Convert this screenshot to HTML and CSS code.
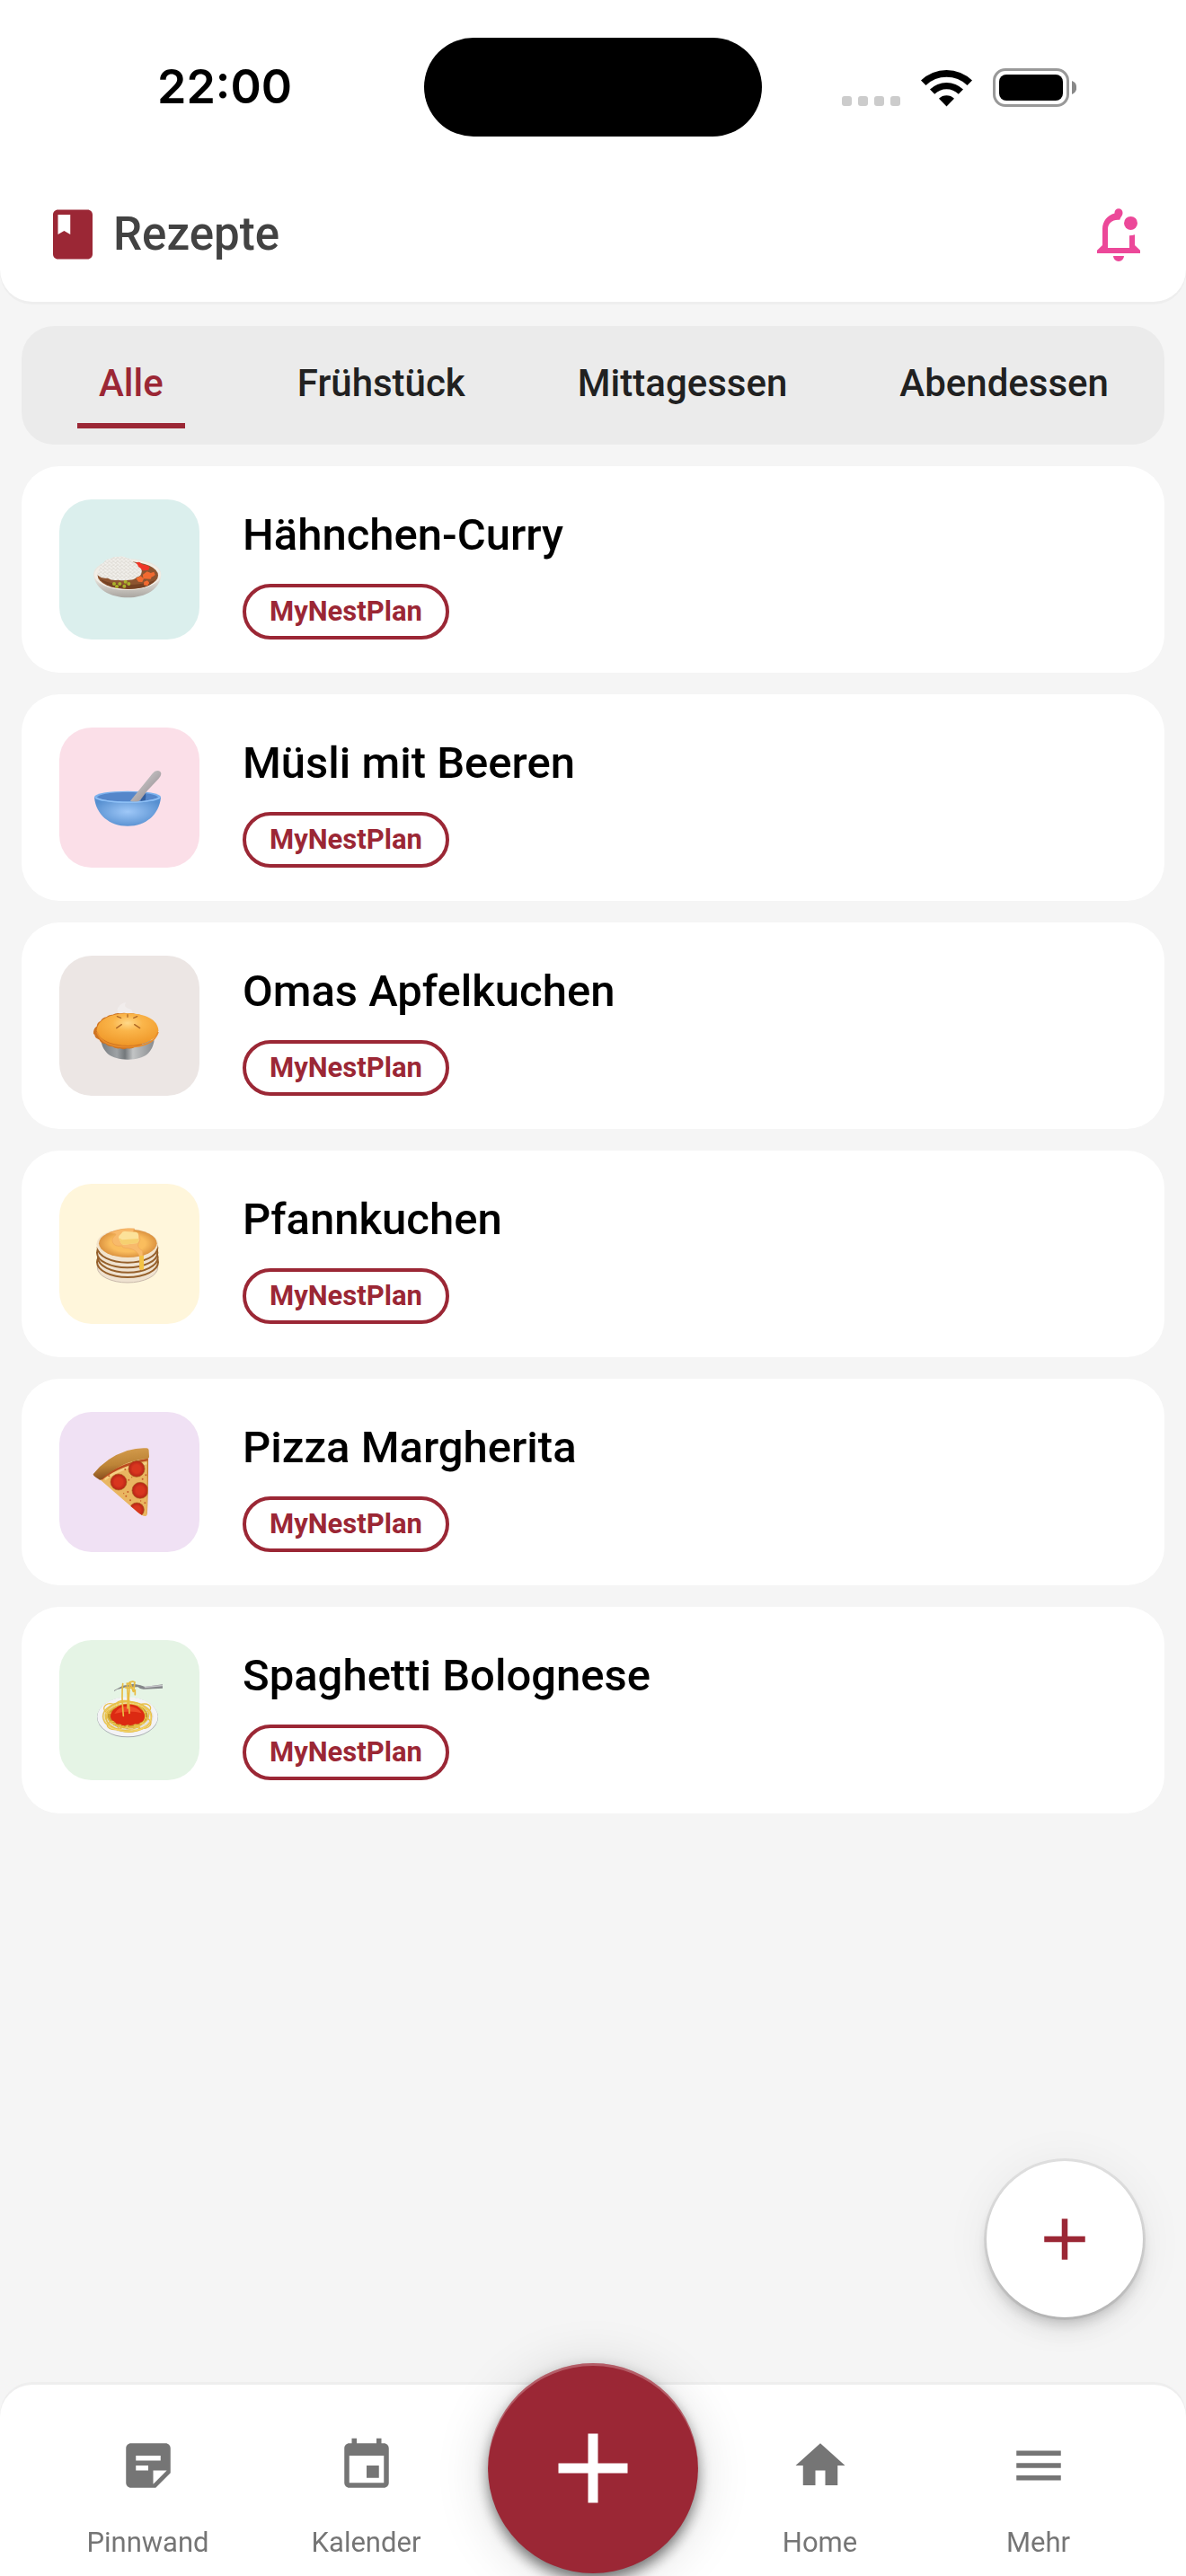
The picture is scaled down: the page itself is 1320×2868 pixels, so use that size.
FILE: index.html
```html
<!DOCTYPE html>
<html lang="de">
<head>
<meta charset="utf-8">
<meta name="viewport" content="width=device-width, initial-scale=1">
<title>Rezepte</title>
<link rel="stylesheet" href="styles.css">
</head>
<body>
<header class="header">
  <div class="status">
    <div class="status-left"><time class="clock">22:00</time></div>
    <div class="island"></div>
    <div class="status-right">
      <svg class="signal" viewBox="0 0 65 12" width="65" height="12" fill="#cccccc" aria-hidden="true"><rect width="11" height="11" rx="3"/><rect x="18" width="11" height="11" rx="3"/><rect x="36" width="11" height="11" rx="3"/><rect x="54" width="11" height="11" rx="3"/></svg>
      <svg viewBox="0 0 57 43" width="57" height="43" aria-hidden="true"><path d="M0 13.5A41 41 0 0 1 57 13.5L51.5 19A33 33 0 0 0 5.500 19ZM10 23.500A26.500 26.500 0 0 1 47 23.500L41.800 28.800A19 19 0 0 0 15.200 28.800ZM20 33.700A12.500 12.500 0 0 1 37 33.700L28.500 42.500Z"/></svg>
      <svg viewBox="0 0 93 43" width="93" height="43" aria-hidden="true"><rect x="1.500" y="1.500" width="82" height="40" rx="12.500" fill="none" stroke="#999" stroke-width="3"/><rect x="7" y="7" width="71" height="29" rx="8"/><path d="M88 14a8 8 0 0 1 0 15z" fill="#888"/></svg>
    </div>
  </div>
  <div class="appbar">
    <svg class="book" viewBox="0 0 24 24" width="66" height="66" aria-hidden="true"><path d="M18 2H6c-1.100 0-2 .9-2 2v16c0 1.100.9 2 2 2h12c1.100 0 2-.9 2-2V4c0-1.100-.9-2-2-2zM6 4h5v8l-2.500-1.500L6 12V4z"/></svg>
    <h1 class="title">Rezepte</h1>
    <button class="bell" aria-label="Benachrichtigungen">
      <svg viewBox="0 0 24 24" width="72" height="72" aria-hidden="true"><path d="M4 19v-1.100L6 16v-6c0-2.800 1.800-5.100 4.500-5.800V3.900a1.500 1.500 0 0 1 3 0c0 .4-.1.900-.3 1.200-.4.500-.6 1-.8 1.500C9.800 6.300 8 7.800 8 10v7h8v-4.600c.7 0 1.400-.1 2-.3V16l2 1.900V19zM10 20h4a2 2 0 0 1-4 0z"/><circle cx="16.500" cy="7.800" r="2.500"/></svg>
    </button>
  </div>
</header>

<main class="content">
  <nav class="tabs" aria-label="Kategorien">
    <button class="tab tab-active">Alle</button>
    <button class="tab">Frühstück</button>
    <button class="tab">Mittagessen</button>
    <button class="tab">Abendessen</button>
  </nav>

  <ul class="recipes">
    <li class="card">
      <svg class="thumb thumb-teal" viewBox="18 18 468 468" aria-hidden="true">
        <defs>
          <linearGradient id="bowl" x1="0" y1="0" x2="0" y2="1"><stop offset=".5" stop-color="#e9e5de"/><stop offset="1" stop-color="#a9a5a0"/></linearGradient>
          <pattern id="grains" width="14" height="12" patternUnits="userSpaceOnUse"><rect width="14" height="12" fill="#e6e3dd"/><ellipse cx="4" cy="3" rx="4" ry="2" fill="#f8f7f4" transform="rotate(30 4 3)"/><ellipse cx="10" cy="8" rx="4" ry="2" fill="#f4f2ee" transform="rotate(-40 10 8)"/><circle cx="3" cy="9" r="1" fill="#c4c0b8"/><circle cx="11" cy="2" r="1" fill="#cbc7bf"/></pattern>
        </defs>
        <path d="M132 270C132 238 180 217 246 217S358 237 358 270C355 318 305 346 247 346S138 318 132 270Z" fill="url(#bowl)"/>
        <ellipse cx="246" cy="270" rx="111" ry="51" fill="#f2eee6"/>
        <ellipse cx="247" cy="272" rx="101" ry="46" fill="#8d5430"/>
        <path d="M155 285Q180 315 247 317T338 288Q300 303 247 303T155 285Z" fill="#754224"/>
        <path d="M273 231q12-9 19 2 10 6 14 3l14 7-4 11-18 2-18-13z" fill="#ef3526"/>
        <path d="M146 271q-3-10 5-19 0-17 14-22 8-13 23-14 14-9 28-6 12-5 26 3 15 1 23 14 16 5 17 16 14 8 11 18-2 15-17 17-8 10-27 9-17 4-34 0-22 4-35-6-20 3-34-10z" fill="url(#grains)"/>
        <g fill="#f26a30"><path d="M297 269l14-10 20 8-8 17-25-1z"/><path d="M323 264l11-4 4 10-9 7-9-4z"/><path d="M274 281l16-7 10 9-5 11-13-1z"/><path d="M301 293l11-4 7 8-7 10-12-3z"/></g>
        <g fill="#aab22b"><circle cx="201" cy="300" r="6"/><circle cx="210" cy="309" r="6"/><circle cx="220" cy="300" r="6"/><circle cx="239" cy="293" r="6"/><circle cx="250" cy="300" r="6"/><circle cx="235" cy="308" r="6"/></g>
      </svg>
      <div class="info"><h2 class="name">Hähnchen-Curry</h2><span class="chip">MyNestPlan</span></div>
    </li>
    <li class="card">
      <svg class="thumb thumb-pink" viewBox="18 30 468 468" aria-hidden="true">
        <defs>
          <radialGradient id="blue" cx=".5" cy=".5" r=".55"><stop offset="0" stop-color="#9fc8f8"/><stop offset="1" stop-color="#568fd0"/></radialGradient>
          <linearGradient id="spoon" x1="0" y1="0" x2="1" y2="1"><stop offset=".3" stop-color="#c4c2c3"/><stop offset="1" stop-color="#8a7e84"/></linearGradient>
        </defs>
        <path d="M135 263C140 320 185 359 246 359S352 320 357 263Z" fill="url(#blue)"/>
        <ellipse cx="246" cy="262" rx="111" ry="20" fill="#7cb2ee"/>
        <path d="M144 263C155 240 337 240 348 263 330 281 162 281 144 263Z" fill="#5586ca"/>
        <path d="M289 276l6-21 8-10q7 10 2 29z" fill="#345f9e"/>
        <path d="M255 275L329 184q10-13 22-9 11 5 5 17-4 8-17 20-28 27-46 54-9 13-18 12-15 1-20-3z" fill="url(#spoon)"/>
        <path d="M139 265Q180 280 246 280T354 265" fill="none" stroke="#8fc0f5" stroke-width="4"/>
      </svg>
      <div class="info"><h2 class="name">Müsli mit Beeren</h2><span class="chip">MyNestPlan</span></div>
    </li>
    <li class="card">
      <svg class="thumb thumb-taupe" viewBox="18 42 468 468" aria-hidden="true">
        <defs>
          <radialGradient id="crust" cx=".5" cy=".3" r=".7"><stop offset="0" stop-color="#ffd98a"/><stop offset=".35" stop-color="#fab54a"/><stop offset="1" stop-color="#ef9728"/></radialGradient>
          <linearGradient id="tin"><stop offset="0" stop-color="#777c80"/><stop offset=".3" stop-color="#9ea2a5"/><stop offset=".45" stop-color="#73787b"/><stop offset=".6" stop-color="#c2c4c5"/><stop offset="1" stop-color="#888b8e"/></linearGradient>
        </defs>
        <path d="M211 222q10-22 29-24-8 18 12 22 13 2 10 18h-45z" fill="#f5f2f1" opacity=".6"/>
        <path d="M157 325C164 365 188 389 247 389S328 365 335 325Z" fill="url(#tin)"/>
        <path d="M132 297q2-15 11-19 1-14 13-18 5-11 19-13 8-9 21-8 13-8 25-4 13-4 26 0 14-3 25 2 15-1 24 8 14 2 21 13 13 5 16 17 12 8 9 18 0 12-9 17-3 11-17 14-6 10-20 12-9 10-23 10-13 9-27 6-14 5-26 0-15 2-25-6-15 0-23-10-16-1-20-13-15-5-16-16-6-4-4-10z" fill="#ce7423"/>
        <path d="M143 292C145 255 190 235 247 235S347 255 349 292C344 325 297 342 247 342S149 325 143 292Z" fill="url(#crust)"/>
        <path d="M144 297C155 332 190 347 247 347S337 332 348 297" fill="none" stroke="#e78c2c" stroke-width="5"/>
        <g stroke="#ae6725" stroke-width="4" stroke-linecap="round"><path d="M211 245l13 5M246 239v8M266 250l12-5M209 284l17-12M269 272l18 12"/></g>
      </svg>
      <div class="info"><h2 class="name">Omas Apfelkuchen</h2><span class="chip">MyNestPlan</span></div>
    </li>
    <li class="card">
      <svg class="thumb thumb-yellow" viewBox="18 24 468 468" aria-hidden="true">
        <defs><radialGradient id="cake" cx=".5" cy=".5" r=".5"><stop offset=".6" stop-color="#fabd5d"/><stop offset="1" stop-color="#dc9340"/></radialGradient></defs>
        <g fill="#efe2d0" stroke="#96602b" stroke-width="6">
          <ellipse cx="246" cy="303" rx="101" ry="51" stroke="#c9b9ab" stroke-width="3"/>
          <ellipse cx="246" cy="286" rx="102" ry="50"/>
          <ellipse cx="247" cy="270" rx="100" ry="50"/>
          <ellipse cx="245" cy="254" rx="101" ry="50"/>
          <ellipse cx="246" cy="238" rx="100" ry="49"/>
        </g>
        <ellipse cx="245" cy="226" rx="103" ry="52" fill="#f2e4cd"/>
        <ellipse cx="247" cy="223" rx="97" ry="47" fill="url(#cake)"/>
        <path d="M186 189Q222 170 269 174L264 184 286 195Q292 213 281 227 279 238 296 248L299 309Q292 314 286 309L287 268Q278 244 248 239 229 239 227 231 202 235 196 219 191 206 207 194Q207 188 186 189Z" fill="#f8ba6b" stroke="#efa657" stroke-width="2"/>
        <path d="M286 264h14v45q-7 5-14 0z" fill="#f4c344"/>
        <path d="M226 189q2-7 12-6l35 2q9 2 9 9l1 21q-3 8-12 8l-35 4q-10 2-13-7l-7-16q0-7 10-15z" fill="#fce29a"/>
        <path d="M217 205l7 17q3 6 12 5l35-4q11-1 12-8v-8l-55 4z" fill="#f6d070"/>
      </svg>
      <div class="info"><h2 class="name">Pfannkuchen</h2><span class="chip">MyNestPlan</span></div>
    </li>
    <li class="card">
      <svg class="thumb thumb-purple" viewBox="18 36 468 468" aria-hidden="true">
        <defs>
          <linearGradient id="rim" x1=".4" y1="0" x2=".6" y2="1"><stop offset="0" stop-color="#d69e4e"/><stop offset=".5" stop-color="#bd8437"/><stop offset="1" stop-color="#7c4218"/></linearGradient>
          <radialGradient id="salami"><stop offset=".5" stop-color="#d8361f"/><stop offset="1" stop-color="#b52416"/></radialGradient>
          <clipPath id="slice"><path d="M153 261Q210 205 316 190L312 372Q311 386 304 384 295 383 280 371Z"/></clipPath>
        </defs>
        <g clip-path="url(#slice)">
          <path d="M150 180h170v210H150z" fill="#e9b661"/>
          <path d="M158 260Q218 212 314 195" fill="none" stroke="#bb4b20" stroke-width="8"/>
          <path d="M170 262Q220 222 311 207" fill="none" stroke="#f4cf84" stroke-width="7"/>
          <g fill="#c65a29"><circle cx="184" cy="250" r="3"/><circle cx="238" cy="228" r="3"/><circle cx="250" cy="263" r="3"/><circle cx="260" cy="254" r="2"/><circle cx="296" cy="260" r="3"/><circle cx="247" cy="303" r="3"/><circle cx="241" cy="317" r="3"/><circle cx="290" cy="333" r="2"/><circle cx="304" cy="340" r="3"/><circle cx="255" cy="331" r="3"/><circle cx="307" cy="247" r="3"/><circle cx="233" cy="308" r="2"/></g>
          <g fill="url(#salami)" stroke="#a6611f" stroke-width="2"><circle cx="276" cy="226" r="27"/><circle cx="216" cy="270" r="27"/><circle cx="288" cy="298" r="27"/><circle cx="277" cy="363" r="24"/></g>
          <path d="M313 190v190" stroke="#b96e24" stroke-width="3"/>
        </g>
        <path d="M131 244Q174 188 245 165 280 155 309 157 318 158 317 168L318 186Q317 193 307 193 229 200 165 256 156 268 149 260Q130 250 131 244Z" fill="url(#rim)"/>
      </svg>
      <div class="info"><h2 class="name">Pizza Margherita</h2><span class="chip">MyNestPlan</span></div>
    </li>
    <li class="card">
      <svg class="thumb thumb-green" viewBox="18 18 468 468" aria-hidden="true">
        <ellipse cx="246" cy="276" rx="102" ry="67" fill="#a5abb0"/>
        <ellipse cx="246" cy="274" rx="101" ry="66" fill="#f3f3f5"/>
        <ellipse cx="246" cy="274" rx="86" ry="53" fill="#e5e3e2"/>
        <ellipse cx="246" cy="272" rx="68" ry="42" fill="#c99b2c"/>
        <g fill="none" stroke="#e8c04a" stroke-width="4"><ellipse cx="245" cy="273" rx="81" ry="49"/><ellipse cx="250" cy="278" rx="75" ry="46"/><ellipse cx="238" cy="271" rx="66" ry="48"/><ellipse cx="247" cy="267" rx="70" ry="43"/><ellipse cx="205" cy="303" rx="27" ry="14"/><ellipse cx="250" cy="311" rx="36" ry="14"/><ellipse cx="295" cy="295" rx="29" ry="19"/><ellipse cx="302" cy="245" rx="21" ry="14"/><ellipse cx="188" cy="246" rx="21" ry="16"/><ellipse cx="236" cy="229" rx="25" ry="9"/></g>
        <g fill="none" stroke="#f7dc75" stroke-width="2"><ellipse cx="246" cy="276" rx="78" ry="47"/><ellipse cx="215" cy="306" rx="29" ry="11"/><ellipse cx="275" cy="306" rx="31" ry="12"/></g>
        <path d="M189 271q2-17 16-25 14-14 41-14 32 1 43 16 15 9 14 26 0 14-12 18-9 9-19 6-14 8-26 3-15 7-26-3-12 2-18-8-14-5-13-19z" fill="#dc2a12"/>
        <path d="M202 264q13-25 44-25 34 0 47 23-42-12-91 2z" fill="#ee4a28"/>
        <path d="M201 186l29-16 36-6 23 5 15 5 59-8v13l-61 3q-15 1-21-7l-37 0-33 8-10 6z" fill="#85878a"/>
        <path d="M301 173l62-6v5l-59 6z" fill="#c7c8cb"/>
        <g fill="none" stroke="#e8bc43" stroke-width="5" stroke-linecap="round"><path d="M230 164q-5 36 2 107M244 162q4 42 2 84M253 161q-5 51-1 101M245 166q14-14 25-7l-4 31M238 176q14 5 31-2M255 161l9 27 7-3v15"/></g>
      </svg>
      <div class="info"><h2 class="name">Spaghetti Bolognese</h2><span class="chip">MyNestPlan</span></div>
    </li>
  </ul>
</main>

<button class="fab" aria-label="Rezept hinzufügen"><svg viewBox="0 0 24 24" width="78" height="78" aria-hidden="true"><path d="M19 13h-6v6h-2v-6H5v-2h6V5h2v6h6z"/></svg></button>

<nav class="navbar" aria-label="Hauptnavigation">
  <a class="nav-item" href="#pinnwand"><svg viewBox="0 0 24 24" width="66" height="66" aria-hidden="true"><path d="M19 3H5c-1.100 0-2 .9-2 2v14c0 1.100.9 2 2 2h10l6-6V5c0-1.100-.9-2-2-2zM7 8h10v2H7V8zm5 6H7v-2h5v2zm2 5.500V14h5.500L14 19.500z"/></svg>Pinnwand</a>
  <a class="nav-item" href="#kalender"><svg viewBox="0 0 24 24" width="66" height="66" aria-hidden="true"><path d="M17 12h-5v5h5v-5zM16 1v2H8V1H6v2H5c-1.100 0-2 .9-2 2v14c0 1.100.9 2 2 2h14c1.100 0 2-.9 2-2V5c0-1.100-.9-2-2-2h-1V1h-2zm3 18H5V8h14v11z"/></svg>Kalender</a>
  <button class="nav-add" aria-label="Hinzufügen"><svg viewBox="0 0 24 24" width="132" height="132" aria-hidden="true"><path d="M19 13h-6v6h-2v-6H5v-2h6V5h2v6h6z"/></svg></button>
  <a class="nav-item" href="#home"><svg viewBox="0 0 24 24" width="66" height="66" aria-hidden="true"><path d="M10 20v-6h4v6h5v-8h3L12 3 2 12h3v8z"/></svg>Home</a>
  <a class="nav-item" href="#mehr"><svg viewBox="0 0 24 24" width="66" height="66" aria-hidden="true"><path d="M3 18h18v-2H3v2zm0-5h18v-2H3v2zm0-7v2h18V6H3z"/></svg>Mehr</a>
</nav>
</body>
</html>
```
FILE: styles.css
```css
:root {
  --brand: #9b2735;
  --page: #f5f5f5;
  --muted: #757575;
}

* { box-sizing: border-box; }

body {
  margin: 0;
  min-height: 100vh;
  display: flex;
  flex-direction: column;
  background: var(--page);
  color: #000;
  font-family: Roboto, "Liberation Sans", sans-serif;
}

svg { display: block; flex: none; }

button {
  border: 0;
  margin: 0;
  padding: 0;
  background: none;
  font-family: inherit;
  cursor: pointer;
}

/* Header */
.header {
  background: #fff;
  border-radius: 0 0 36px 36px;
  box-shadow: 0 3px 0 #eee;
}

.status {
  display: grid;
  grid-template-columns: 1fr 376px 1fr;
  align-items: center;
  padding: 42px 0 34px;
}

.status-left {
  display: flex;
  justify-content: center;
  padding-left: 28px;
}

.clock {
  font: 600 52px/64px Inter, sans-serif;
}

.island {
  height: 110px;
  border-radius: 55px;
  background: #000;
}

.status-right {
  display: flex;
  justify-content: center;
  align-items: flex-end;
  gap: 23px;
  padding-right: 33px;
}

.appbar {
  display: flex;
  align-items: center;
  gap: 12px;
  height: 150px;
  padding: 0 39px 0 48px;
}

.book { fill: var(--brand); }

.title {
  flex: 1;
  margin: 0;
  font-size: 51px;
  line-height: 60px;
  font-weight: 500;
  color: #424242;
}

.bell svg { fill: #ec4899; }

/* Category tabs and recipe list */
.content {
  flex: 1;
  padding: 27px 24px 24px;
}

.tabs {
  display: flex;
  justify-content: space-between;
  padding: 18px 38px 18px 62px;
  border-radius: 36px;
  background: #ebebeb;
}

.tab {
  height: 96px;
  padding: 2px 24px 6px;
  font-size: 42px;
  line-height: 48px;
  font-weight: 500;
  color: #212121;
}

.tab-active {
  margin-right: 24px;
  padding-bottom: 0;
  border-bottom: 6px solid var(--brand);
  color: var(--brand);
}

.recipes {
  display: flex;
  flex-direction: column;
  gap: 24px;
  margin: 24px 0 0;
  padding: 0;
  list-style: none;
}

.card {
  display: flex;
  gap: 48px;
  padding: 37px 42px;
  border-radius: 42px;
  background: #fff;
}

.thumb {
  width: 156px;
  height: 156px;
  border-radius: 36px;
}

.thumb-teal { background: #dbefed; }
.thumb-pink { background: #fbdfe8; }
.thumb-taupe { background: #ece6e4; }
.thumb-yellow { background: #fff6db; }
.thumb-purple { background: #f0e1f4; }
.thumb-green { background: #e5f4e5; }

.info {
  display: flex;
  flex-direction: column;
  align-items: flex-start;
  gap: 26px;
  padding-top: 12px;
}

.name {
  margin: 0;
  font-size: 49px;
  line-height: 56px;
  font-weight: 500;
}

.chip {
  padding: 9px 26px;
  border: 4px solid var(--brand);
  border-radius: 31px;
  font-size: 31px;
  line-height: 36px;
  font-weight: 700;
  color: var(--brand);
}

/* Floating action button */
.fab {
  position: fixed;
  right: 48px;
  bottom: 288px;
  display: grid;
  place-items: center;
  width: 174px;
  height: 174px;
  border-radius: 50%;
  background: #fff;
  box-shadow: 0 0 0 3px rgba(0, 0, 0, .08), 0 9px 15px -3px rgba(0, 0, 0, .2), 0 18px 30px rgba(0, 0, 0, .06), 0 3px 54px rgba(0, 0, 0, .06);
}

.fab svg { fill: var(--brand); }

/* Bottom navigation */
.navbar {
  position: sticky;
  bottom: 0;
  display: grid;
  grid-template-columns: 1fr 1fr 262px 1fr 1fr;
  height: 213px;
  padding: 0 43px;
  border-radius: 36px 36px 0 0;
  background: #fff;
  box-shadow: 0 -3px 0 #eee;
}

.nav-item {
  display: flex;
  flex-direction: column;
  align-items: center;
  gap: 35px;
  padding-top: 57px;
  font-size: 31px;
  line-height: 36px;
  color: var(--muted);
  text-decoration: none;
}

.nav-item svg { fill: var(--muted); }

.nav-add {
  display: grid;
  place-items: center;
  justify-self: center;
  width: 234px;
  height: 234px;
  margin-top: -24px;
  border-radius: 50%;
  background: var(--brand);
  box-shadow: inset 0 3px 0 rgba(255, 255, 255, .25), 0 9px 15px -3px rgba(0, 0, 0, .4), 0 6px 18px rgba(0, 0, 0, .25), 0 6px 60px rgba(0, 0, 0, .15);
}

.nav-add svg { fill: #fff; }
```
